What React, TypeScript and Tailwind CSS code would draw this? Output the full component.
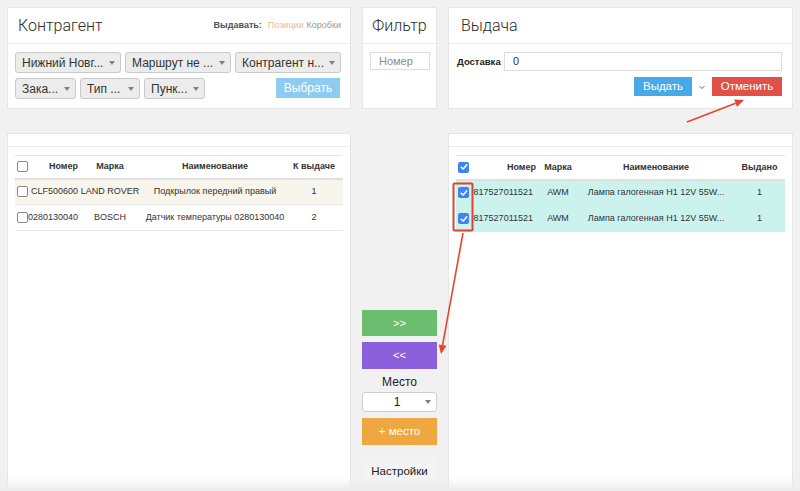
import React from "react"

const sans = "font-['Liberation_Sans',Arial,sans-serif]"

function Caret() {
  return (
    <span className="ml-auto w-0 h-0 border-l-[3.5px] border-r-[3.5px] border-t-[4px] border-l-transparent border-r-transparent border-t-[#808080]" />
  )
}

function Drop({ label, className }: { label: string; className: string }) {
  return (
    <div
      className={`h-[21px] flex items-center rounded-[3px] border border-[#c9c9c9] bg-[#ececec] pl-[6px] pr-[5px] text-[12px] text-[#333] ${className}`}
    >
      <span className="whitespace-nowrap">{label}</span>
      <Caret />
    </div>
  )
}

function Box({ checked }: { checked?: boolean }) {
  if (checked)
    return (
      <span className="w-[11px] h-[11px] shrink-0 rounded-[2px] bg-[#3d84f5] flex items-center justify-center">
        <svg width="8" height="8" viewBox="0 0 8 8">
          <path d="M1.2 4.2 L3.2 6 L6.8 1.8" stroke="white" strokeWidth="1.5" fill="none" strokeLinecap="round" strokeLinejoin="round" />
        </svg>
      </span>
    )
  return <span className="w-[11px] h-[11px] shrink-0 rounded-[2px] border border-[#8a8a8a] bg-white" />
}

const title = "font-['Roboto',sans-serif] font-light text-[16px] text-[#2b2b2b]"

const leftRows = [
  { num: "CLF500600", brand: "LAND ROVER", name: "Подкрылок передний правый", qty: "1", bg: "bg-[#f8f5ec]" },
  { num: "0280130040", brand: "BOSCH", name: "Датчик температуры 0280130040", qty: "2", bg: "bg-white" },
]

const rightRows = [
  { num: "817527011521", brand: "AWM", name: "Лампа галогенная H1 12V 55W...", qty: "1" },
  { num: "817527011521", brand: "AWM", name: "Лампа галогенная H1 12V 55W...", qty: "1" },
]

export default function App() {
  return (
    <div className={`relative w-[800px] h-[491px] overflow-hidden bg-[#f1f1f1] ${sans}`}>
      <div className="grid grid-cols-[344px_75px_345px] gap-x-[11px] px-[7px] pt-[7px]">
        {/* Контрагент */}
        <div className="h-[102px] bg-white border border-[#e6e6e6]">
          <div className="h-[36px] border-b border-[#ebebeb] flex items-center pl-[10px] pr-[9px]">
            <span className={title}>Контрагент</span>
            <span className="ml-auto text-[9px] font-bold text-[#4b5563]">Выдавать:</span>
            <span className="ml-[6px] text-[9px] text-[#f4b98b]">Позиции</span>
            <span className="ml-[3px] text-[9px] text-[#9a9a9a]">Коробки</span>
          </div>
          <div className="px-[7px] pt-[8px] flex flex-col gap-[5px]">
            <div className="flex gap-[4px]">
              <Drop label="Нижний Новг..." className="w-[106px]" />
              <Drop label="Маршрут не ..." className="w-[106px]" />
              <Drop label="Контрагент н..." className="w-[106px]" />
            </div>
            <div className="flex gap-[4px]">
              <Drop label="Зака..." className="w-[61px]" />
              <Drop label="Тип ..." className="w-[60px]" />
              <Drop label="Пунк..." className="w-[61px]" />
              <button className="ml-auto mr-[3px] w-[64px] h-[20px] bg-[#8fcaf1] text-white text-[12px]">Выбрать</button>
            </div>
          </div>
        </div>

        {/* Фильтр */}
        <div className="h-[102px] bg-white border border-[#e6e6e6]">
          <div className="h-[36px] border-b border-[#ebebeb] flex items-center justify-center">
            <span className={title}>Фильтр</span>
          </div>
          <div className="px-[7px] pt-[8px]">
            <div className="w-[60px] h-[18px] border border-[#dcdcdc] flex items-center pl-[8px] text-[11px] text-[#8a8a8a]">Номер</div>
          </div>
        </div>

        {/* Выдача */}
        <div className="h-[102px] bg-white border border-[#e6e6e6]">
          <div className="h-[36px] border-b border-[#ebebeb] flex items-center pl-[12px]">
            <span className={title}>Выдача</span>
          </div>
          <div className="pl-[8px] pr-[10px] pt-[8px]">
            <div className="flex items-start">
              <span className="text-[9.5px] font-bold text-[#222] pt-[3px] w-[47px]">Доставка</span>
              <div className="flex-1 h-[19px] border border-[#dcdcdc] flex items-center pl-[8px] text-[11px] text-[#333]">0</div>
            </div>
            <div className="flex items-center justify-end mt-[6px]">
              <button className="w-[58px] h-[19px] bg-[#48a9e8] text-white text-[11.5px]">Выдать</button>
              <svg className="mx-[6px]" width="8" height="8" viewBox="0 0 8 8">
                <path d="M1.5 3 L4 5.5 L6.5 3" stroke="#666" strokeWidth="1" fill="none" />
              </svg>
              <button className="w-[70px] h-[19px] bg-[#e1514a] text-white text-[11.5px]">Отменить</button>
            </div>
          </div>
        </div>

        {/* Left list */}
        <div className="mt-[24px] h-[360px] bg-white border border-[#e6e6e6]">
          <div className="h-[13px] border-b border-[#ebebeb]" />
          <div className="px-[7px] pt-[8px]">
            <table className="w-full table-fixed border-collapse text-[9px] text-[#333]">
              <colgroup>
                <col className="w-[65px]" />
                <col className="w-[60px]" />
                <col className="w-[150px]" />
                <col />
              </colgroup>
              <thead>
                <tr className="h-[23px] border-t border-[#e4e4e4] border-b-2 border-b-[#e0e0e0]">
                  <th className="font-bold">
                    <div className="flex items-center pl-[2px] pr-[2px]">
                      <Box />
                      <span className="ml-auto">Номер</span>
                    </div>
                  </th>
                  <th className="font-bold text-center">Марка</th>
                  <th className="font-bold text-center">Наименование</th>
                  <th className="font-bold text-center pr-[5px]">К выдаче</th>
                </tr>
              </thead>
              <tbody>
                {leftRows.map((r, i) => (
                  <tr key={i} className={`h-[26px] border-b border-[#e6e6e6] ${r.bg}`}>
                    <td>
                      <div className="flex items-center pl-[2px] pr-[2px]">
                        <Box />
                        <span className="ml-auto">{r.num}</span>
                      </div>
                    </td>
                    <td className="text-center whitespace-nowrap">{r.brand}</td>
                    <td className="text-center whitespace-nowrap">{r.name}</td>
                    <td className="text-center pr-[5px]">{r.qty}</td>
                  </tr>
                ))}
              </tbody>
            </table>
          </div>
        </div>

        {/* Middle */}
        <div className="mt-[24px] flex flex-col items-stretch pt-[177px]">
          <button className="h-[26px] bg-[#6cbd6f] text-white text-[11px]">&gt;&gt;</button>
          <button className="mt-[6px] h-[27px] bg-[#8c5fdd] text-white text-[11px]">&lt;&lt;</button>
          <div className="mt-[6px] text-center text-[12px] text-[#222] leading-[14px]">Место</div>
          <div className="mt-[3px] h-[20px] rounded-[3px] border border-[#cfcfcf] bg-white flex items-center text-[12px] text-[#222] pr-[5px]">
            <span className="flex-1 text-center pl-[6px]">1</span>
            <span className="w-0 h-0 border-l-[3.5px] border-r-[3.5px] border-t-[4px] border-l-transparent border-r-transparent border-t-[#808080]" />
          </div>
          <button className="mt-[6px] h-[27px] bg-[#efa742] text-white text-[11.5px]">+ место</button>
          <button className="mt-[13px] h-[27px] bg-[#f3f3f3] text-[#222] text-[11.5px]">Настройки</button>
        </div>

        {/* Right list */}
        <div className="mt-[24px] h-[360px] bg-white border border-[#e6e6e6]">
          <div className="h-[13px] border-b border-[#ebebeb]" />
          <div className="px-[7px] pt-[8px]">
            <table className="w-full table-fixed border-collapse text-[9px] text-[#333]">
              <colgroup>
                <col className="w-[82px]" />
                <col className="w-[40px]" />
                <col className="w-[156px]" />
                <col />
              </colgroup>
              <thead>
                <tr className="h-[24px] border-t border-[#e4e4e4] border-b-2 border-b-[#e0e0e0]">
                  <th className="font-bold">
                    <div className="flex items-center pl-[2px] pr-[2px]">
                      <Box checked />
                      <span className="ml-auto">Номер</span>
                    </div>
                  </th>
                  <th className="font-bold text-center">Марка</th>
                  <th className="font-bold text-center">Наименование</th>
                  <th className="font-bold text-center">Выдано</th>
                </tr>
              </thead>
              <tbody>
                {rightRows.map((r, i) => (
                  <tr key={i} className="h-[26px] bg-[#cbf2ed] border-b border-[#d5efec]">
                    <td>
                      <div className="flex items-center pl-[2px] pr-[5px]">
                        <Box checked />
                        <span className="ml-auto">{r.num}</span>
                      </div>
                    </td>
                    <td className="text-center">{r.brand}</td>
                    <td className="text-center whitespace-nowrap">{r.name}</td>
                    <td className="text-center">{r.qty}</td>
                  </tr>
                ))}
              </tbody>
            </table>
          </div>
        </div>
      </div>

      {/* bottom fade of the screenshot */}
      <div className="absolute inset-x-0 bottom-0 h-[14px] pointer-events-none bg-gradient-to-b from-transparent to-[#ececec]" />

      {/* annotations */}
      <svg className="absolute inset-0 pointer-events-none" width="800" height="491" viewBox="0 0 800 491">
        <rect x="453.5" y="183.5" width="19" height="47" rx="1" fill="none" stroke="#e2432f" strokeWidth="2" />
        <line x1="463" y1="233" x2="442.6" y2="345.1" stroke="#e8452e" strokeWidth="1.6" />
        <polygon points="441,354 446.5,345.8 438.7,344.4" fill="#e8452e" />
        <line x1="687" y1="122" x2="735.6" y2="103.2" stroke="#e8452e" strokeWidth="1.6" />
        <polygon points="744,100 737,106.9 734.2,99.5" fill="#e8452e" />
      </svg>
    </div>
  )
}
